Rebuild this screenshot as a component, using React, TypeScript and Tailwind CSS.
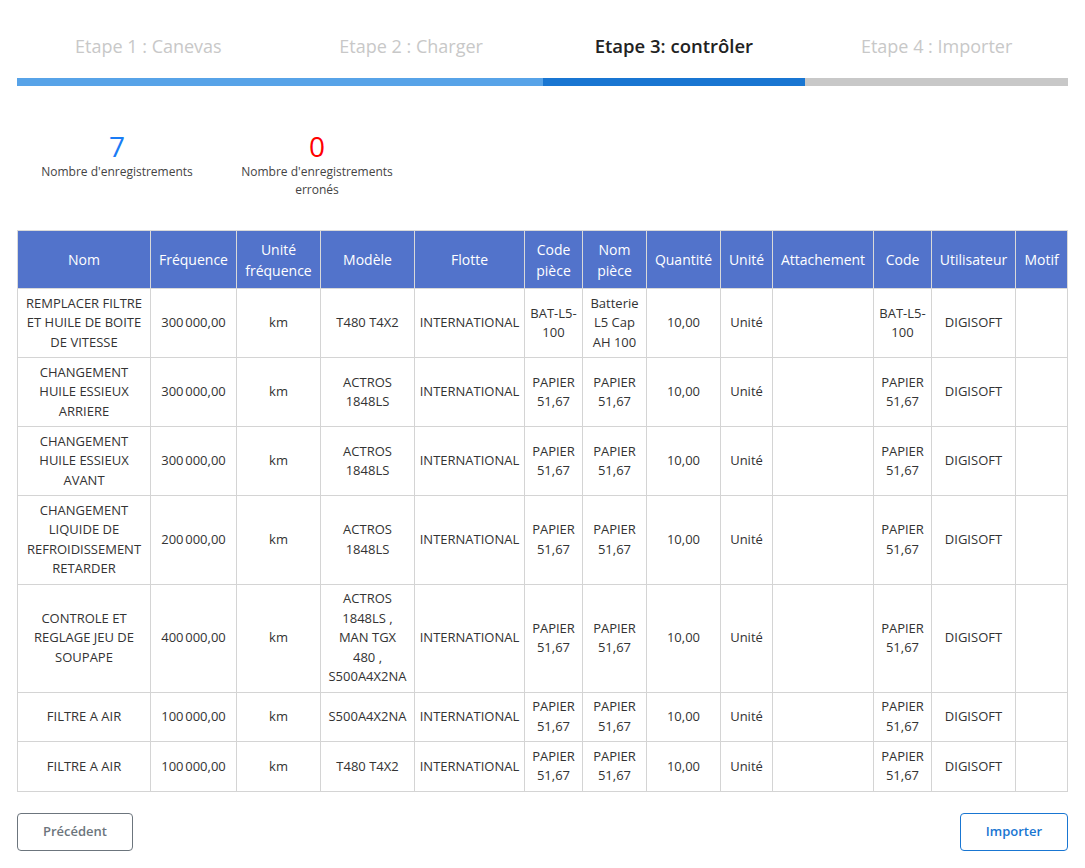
import React from 'react';

const steps = [
  { label: 'Etape 1 : Canevas', state: 'done' },
  { label: 'Etape 2 : Charger', state: 'done' },
  { label: 'Etape 3: contrôler', state: 'active' },
  { label: 'Etape 4 : Importer', state: 'todo' },
];

const columns = [
  { label: 'Nom', width: 133 },
  { label: 'Fréquence', width: 86 },
  { label: 'Unité fréquence', width: 84 },
  { label: 'Modèle', width: 94 },
  { label: 'Flotte', width: 110 },
  { label: 'Code pièce', width: 58 },
  { label: 'Nom pièce', width: 64 },
  { label: 'Quantité', width: 74 },
  { label: 'Unité', width: 52 },
  { label: 'Attachement', width: 101 },
  { label: 'Code', width: 58 },
  { label: 'Utilisateur', width: 84 },
  { label: 'Motif', width: 52 },
];

const papier = 'PAPIER 51,67';

const rows: string[][] = [
  ['REMPLACER FILTRE ET HUILE DE BOITE DE VITESSE', '300\u202f000,00', 'km', 'T480 T4X2', 'INTERNATIONAL', 'BAT-L5-100', 'Batterie L5 Cap AH 100', '10,00', 'Unité', '', 'BAT-L5-100', 'DIGISOFT', ''],
  ['CHANGEMENT HUILE ESSIEUX ARRIERE', '300\u202f000,00', 'km', 'ACTROS 1848LS', 'INTERNATIONAL', papier, papier, '10,00', 'Unité', '', papier, 'DIGISOFT', ''],
  ['CHANGEMENT HUILE ESSIEUX AVANT', '300\u202f000,00', 'km', 'ACTROS 1848LS', 'INTERNATIONAL', papier, papier, '10,00', 'Unité', '', papier, 'DIGISOFT', ''],
  ['CHANGEMENT LIQUIDE DE REFROIDISSEMENT RETARDER', '200\u202f000,00', 'km', 'ACTROS 1848LS', 'INTERNATIONAL', papier, papier, '10,00', 'Unité', '', papier, 'DIGISOFT', ''],
  ['CONTROLE ET REGLAGE JEU DE SOUPAPE', '400\u202f000,00', 'km', 'ACTROS 1848LS , MAN TGX 480 , S500A4X2NA', 'INTERNATIONAL', papier, papier, '10,00', 'Unité', '', papier, 'DIGISOFT', ''],
  ['FILTRE A AIR', '100\u202f000,00', 'km', 'S500A4X2NA', 'INTERNATIONAL', papier, papier, '10,00', 'Unité', '', papier, 'DIGISOFT', ''],
  ['FILTRE A AIR', '100\u202f000,00', 'km', 'T480 T4X2', 'INTERNATIONAL', papier, papier, '10,00', 'Unité', '', papier, 'DIGISOFT', ''],
];

export default function App() {
  return (
    <div className="bg-white min-h-[868px] px-[17px] pt-[29px] font-['Open_Sans',sans-serif] text-[#333]">
      {/* Stepper */}
      <div className="grid grid-cols-4">
        {steps.map((s) => (
          <div
            key={s.label}
            className={`text-center leading-[34px] ${
              s.state === 'active' ? 'text-[18.5px] font-semibold text-[#222]' : 'text-[18px] text-[#c8c8c8]'
            }`}
          >
            {s.label}
          </div>
        ))}
      </div>
      <div className="flex h-2 mt-[15px]">
        <div className="w-1/2 bg-[#57a3e8]" />
        <div className="w-1/4 bg-[#1976d2]" />
        <div className="w-1/4 bg-[#c8c8c8]" />
      </div>

      {/* Counters */}
      <div className="flex mt-[43px]">
        <div className="w-[200px] px-[15px] text-center">
          <div className="text-[28px] leading-[34px] text-[#1a7cf5]">7</div>
          <div className="text-[12px] leading-[18px] text-[#444]">Nombre d'enregistrements</div>
        </div>
        <div className="w-[200px] px-[15px] text-center">
          <div className="text-[28px] leading-[34px] text-[#ff0000]">0</div>
          <div className="text-[12px] leading-[18px] text-[#444]">Nombre d'enregistrements erronés</div>
        </div>
      </div>

      {/* Table */}
      <table className="table-fixed w-[1050px] mt-[31px] border-collapse text-[13px] leading-[19.5px]">
        <colgroup>
          {columns.map((c) => (
            <col key={c.label} style={{ width: c.width }} />
          ))}
        </colgroup>
        <thead>
          <tr className="bg-[#5273cb] text-white">
            {columns.map((c) => (
              <th
                key={c.label}
                className="border border-[#d9d9d9] px-[4px] py-[7.5px] text-[14px] leading-[21px] font-normal text-center"
              >
                {c.label}
              </th>
            ))}
          </tr>
        </thead>
        <tbody>
          {rows.map((r, i) => (
            <tr key={i}>
              {r.map((cell, j) => (
                <td
                  key={j}
                  className={`border border-[#d4d4d4] py-[4.75px] text-center align-middle text-[#333] ${
                    j === 3 ? 'px-[7px]' : 'px-[3px]'
                  }`}
                >
                  {cell}
                </td>
              ))}
            </tr>
          ))}
        </tbody>
      </table>

      {/* Footer buttons */}
      <div className="flex justify-between mt-[21px]">
        <button className="w-[116px] h-[38px] rounded-[4px] border border-[#6c757d] text-[13px] font-semibold text-[#6c757d]">
          Précédent
        </button>
        <button className="w-[108px] h-[38px] rounded-[4px] border border-[#1976d2] text-[13px] font-semibold text-[#1976d2]">
          Importer
        </button>
      </div>
    </div>
  );
}
